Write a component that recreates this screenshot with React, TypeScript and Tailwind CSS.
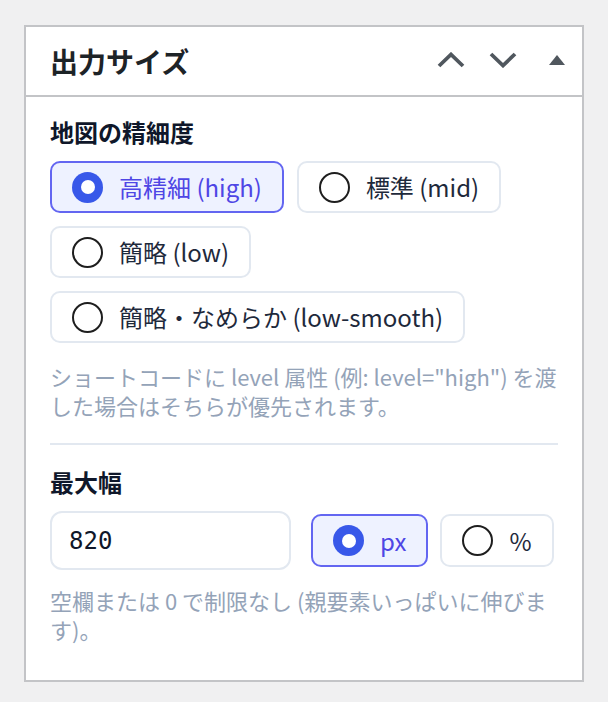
import { useState } from "react"

const FONT = { fontFamily: '"Noto Sans CJK JP", "Noto Sans", sans-serif' }

const levels = [
  { value: "high", label: "高精細 (high)" },
  { value: "mid", label: "標準 (mid)" },
  { value: "low", label: "簡略 (low)" },
  { value: "low-smooth", label: "簡略・なめらか (low-smooth)" },
]

const Radio = ({ checked }: { checked: boolean }) =>
  checked ? (
    <span className="flex h-[31px] w-[31px] shrink-0 items-center justify-center rounded-full bg-[#3858e9]">
      <span className="h-[14px] w-[14px] rounded-full bg-white" />
    </span>
  ) : (
    <span className="h-[31px] w-[31px] shrink-0 rounded-full border-2 border-[#1e1e1e] bg-white" />
  )

const Option = ({
  checked,
  label,
  onClick,
  height = "h-[52px]",
}: {
  checked: boolean
  label: string
  onClick: () => void
  height?: string
}) => (
  <button
    type="button"
    onClick={onClick}
    className={`flex ${height} items-center gap-4 rounded-[10px] border-2 px-5 text-[24px] leading-none ${
      checked
        ? "border-[#6366f1] bg-[#eef2ff] text-[#4f46e5]"
        : "border-[#e2e8f0] bg-white text-[#1e293b]"
    }`}
  >
    <Radio checked={checked} />
    <span className="whitespace-nowrap">{label}</span>
  </button>
)

export default function App() {
  const [level, setLevel] = useState("high")
  const [unit, setUnit] = useState("px")
  const [width, setWidth] = useState("820")

  return (
    <div className="min-h-screen bg-[#f0f0f1] pl-6 pt-[25px]" style={FONT}>
      <div className="w-[560px] border-2 border-[#c3c4c7] bg-white">
        {/* Header */}
        <div className="flex h-[70px] items-center justify-between border-b-2 border-[#c3c4c7] pl-6 pr-[17px]">
          <h2 className="text-[28px] font-bold leading-none text-[#1d2327]">出力サイズ</h2>
          <div className="mb-[3px] flex items-center">
            <svg width="28" height="16" viewBox="0 0 28 16" fill="none">
              <path d="M2 14L14 2.5L26 14" stroke="#50575e" strokeWidth="3.8" />
            </svg>
            <svg width="28" height="16" viewBox="0 0 28 16" fill="none" className="ml-6">
              <path d="M2 2L14 13.5L26 2" stroke="#50575e" strokeWidth="3.8" />
            </svg>
            <svg width="16" height="10" viewBox="0 0 16 10" className="ml-8 mt-[1px]">
              <polygon points="0,10 8,0 16,10" fill="#50575e" />
            </svg>
          </div>
        </div>

        {/* Body */}
        <div className="px-6 pb-9 pt-[18px]">
          <h3 className="text-[24px] font-bold leading-[34px] text-[#0f172a]">地図の精細度</h3>
          <div className="mt-3 flex flex-wrap gap-x-[13px] gap-y-[13px]">
            {levels.map((l) => (
              <Option
                key={l.value}
                checked={level === l.value}
                label={l.label}
                onClick={() => setLevel(l.value)}
              />
            ))}
          </div>
          <p className="mt-[19px] text-[22px] leading-[29px] text-[#94a3b8]">
            ショートコードに level 属性 (例: level="high") を渡した場合はそちらが優先されます。
          </p>

          <hr className="mt-[23px] border-t-2 border-[#e2e8f0]" />

          <h3 className="mt-[20px] text-[24px] font-bold leading-[34px] text-[#0f172a]">最大幅</h3>
          <div className="mt-3 flex items-center">
            <input
              type="text"
              value={width}
              onChange={(e) => setWidth(e.target.value)}
              className="h-[59px] w-[241px] rounded-[12px] border-2 border-[#e2e8f0] px-[17px] text-[24px] text-[#0f172a] outline-none"
              style={{ fontFamily: '"DejaVu Sans Mono", monospace' }}
            />
            <div className="ml-5 flex gap-3">
              <Option checked={unit === "px"} label="px" onClick={() => setUnit("px")} height="h-[53px]" />
              <Option checked={unit === "%"} label="%" onClick={() => setUnit("%")} height="h-[53px]" />
            </div>
          </div>
          <p className="mt-4 text-[22px] leading-[29px] text-[#94a3b8]">
            空欄または 0 で制限なし (親要素いっぱいに伸びます)。
          </p>
        </div>
      </div>
    </div>
  )
}
